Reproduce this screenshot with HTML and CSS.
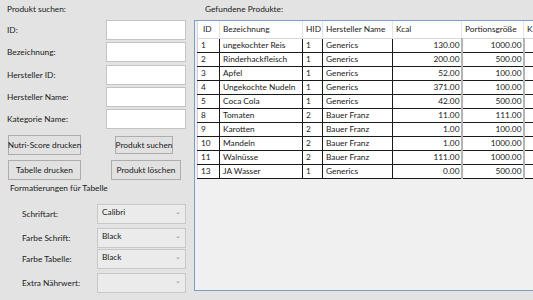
FILE: index.html
```html
<!DOCTYPE html>
<html>
<head>
<meta charset="utf-8">
<link rel="stylesheet" href="styles.css">
</head>
<body>
<div class="window">
  <div class="left">
    <div class="title">Produkt suchen:</div>
    <div class="frow r1"><span class="lbl">ID:</span><span class="tb"></span></div>
    <div class="frow"><span class="lbl">Bezeichnung:</span><span class="tb"></span></div>
    <div class="frow"><span class="lbl">Hersteller ID:</span><span class="tb"></span></div>
    <div class="frow"><span class="lbl">Hersteller Name:</span><span class="tb"></span></div>
    <div class="frow"><span class="lbl">Kategorie Name:</span><span class="tb"></span></div>
    <div class="brow b1">
      <span class="btn btn-nutri">Nutri-Score drucken</span>
      <span class="btn btn-suchen">Produkt suchen</span>
    </div>
    <div class="brow b2">
      <span class="btn btn-tab">Tabelle drucken</span>
      <span class="btn btn-loeschen">Produkt löschen</span>
    </div>
    <div class="subtitle">Formatierungen für Tabelle</div>
    <div class="crow c1"><span class="clbl">Schriftart:</span><span class="combo"><span class="cval">Calibri</span><span class="arrow">&#8964;</span></span></div>
    <div class="crow c2"><span class="clbl">Farbe Schrift:</span><span class="combo"><span class="cval">Black</span><span class="arrow">&#8964;</span></span></div>
    <div class="crow c3"><span class="clbl">Farbe Tabelle:</span><span class="combo"><span class="cval">Black</span><span class="arrow">&#8964;</span></span></div>
    <div class="crow c4"><span class="clbl">Extra Nährwert:</span><span class="combo"><span class="cval"></span><span class="arrow">&#8964;</span></span></div>
  </div>
  <div class="right">
    <div class="rtitle">Gefundene Produkte:</div>
    <div class="gridbox">
      <table class="grid">
        <colgroup>
          <col class="w-id"><col class="w-bez"><col class="w-hid"><col class="w-her"><col class="w-kcal"><col class="w-port"><col class="w-ka">
        </colgroup>
        <thead>
          <tr><th>ID</th><th>Bezeichnung</th><th>HID</th><th>Hersteller Name</th><th>Kcal</th><th>Portionsgröße</th><th>Ka</th></tr>
        </thead>
        <tbody>
          <tr><td>1</td><td>ungekochter Reis</td><td>1</td><td>Generics</td><td class="num">130.00</td><td class="num">1000.00</td><td></td></tr>
          <tr><td>2</td><td>Rinderhackfleisch</td><td>1</td><td>Generics</td><td class="num">200.00</td><td class="num">500.00</td><td></td></tr>
          <tr><td>3</td><td>Apfel</td><td>1</td><td>Generics</td><td class="num">52.00</td><td class="num">100.00</td><td></td></tr>
          <tr><td>4</td><td>Ungekochte Nudeln</td><td>1</td><td>Generics</td><td class="num">371.00</td><td class="num">100.00</td><td></td></tr>
          <tr><td>5</td><td>Coca Cola</td><td>1</td><td>Generics</td><td class="num">42.00</td><td class="num">500.00</td><td></td></tr>
          <tr><td>8</td><td>Tomaten</td><td>2</td><td>Bauer Franz</td><td class="num">11.00</td><td class="num">111.00</td><td></td></tr>
          <tr><td>9</td><td>Karotten</td><td>2</td><td>Bauer Franz</td><td class="num">1.00</td><td class="num">100.00</td><td></td></tr>
          <tr><td>10</td><td>Mandeln</td><td>2</td><td>Bauer Franz</td><td class="num">1.00</td><td class="num">1000.00</td><td></td></tr>
          <tr><td>11</td><td>Walnüsse</td><td>2</td><td>Bauer Franz</td><td class="num">111.00</td><td class="num">1000.00</td><td></td></tr>
          <tr><td>13</td><td>JA Wasser</td><td>1</td><td>Generics</td><td class="num">0.00</td><td class="num">500.00</td><td></td></tr>
        </tbody>
      </table>
    </div>
  </div>
</div>
</body>
</html>
```

FILE: styles.css
```css
* { box-sizing: border-box; }
html, body { margin: 0; padding: 0; }
body {
  width: 533px;
  height: 300px;
  overflow: hidden;
  background: #e3e3e3;
  font-family: Lato, "Open Sans", sans-serif;
  font-size: 8.3px;
  color: #1a1a1a;
}
.window { display: flex; width: 533px; height: 300px; }
.left { width: 190px; flex: none; }
.title { margin: 4px 0 0 7px; height: 11px; line-height: 11px; }
.frow { display: flex; align-items: center; height: 20px; margin-top: 2.3px; padding-left: 7px; }
.frow.r1 { margin-top: 5px; }
.lbl { width: 99px; }
.tb { width: 80px; height: 20px; background: #fff; border: 1px solid #c4c4c4; }
.brow { display: flex; align-items: center; height: 20px; padding-left: 8px; }
.b1 { margin-top: 6px; }
.b2 { margin-top: 5px; }
.btn { display: flex; align-items: center; justify-content: center; background: #e1e1e1; border: 1px solid #adadad; height: 20px; white-space: nowrap; flex: none; }
.btn-nutri { width: 73px; }
.btn-tab { width: 73px; }
.btn-suchen { width: 58px; height: 18px; margin-left: 34px; }
.btn-loeschen { width: 70px; margin-left: 30px; }
.subtitle { margin: 3px 0 0 10px; height: 11px; line-height: 11px; }
.crow { display: flex; align-items: center; height: 20px; padding-left: 22px; }
.c1 { margin-top: 10px; }
.c2 { margin-top: 4px; }
.c3 { margin-top: 1px; }
.c4 { margin-top: 4px; }
.clbl { width: 75px; }
.combo { position: relative; width: 89px; height: 20px; background: #ebebeb; border: 1px solid #c8c8c8; }
.cval { position: absolute; left: 4px; top: 2px; }
.arrow { position: absolute; right: 4px; top: 2px; color: #8a8a8a; font-size: 7px; }
.right { flex: 1; }
.rtitle { margin: 4px 0 0 15px; height: 11px; line-height: 11px; }
.gridbox {
  margin: 5px 0 0 4px;
  width: 400px;
  height: 271px;
  background: #f0f0f0;
  border: 1px solid #7f9dc4;
  padding: 0 0 0 2px;
}
.grid { border-collapse: collapse; table-layout: fixed; width: 386px; }
.w-id { width: 22px; }
.w-bez { width: 83px; }
.w-hid { width: 20px; }
.w-her { width: 70px; }
.w-kcal { width: 69px; }
.w-port { width: 62px; }
.w-ka { width: 60px; }
th {
  height: 17px;
  background: #fff;
  font-weight: normal;
  text-align: left;
  padding: 0 0 0 3px;
  border-right: 1px solid #e4e4e4;
  border-bottom: 1px solid #d8d8d8;
  white-space: nowrap;
  overflow: hidden;
}
th:first-child { padding-left: 5px; border-left: 1px solid #d8d8d8; }
td {
  height: 14px;
  background: #fff;
  padding: 0 0 0 3px;
  border-bottom: 1px solid #1a1a1a;
  border-right: 1px solid #1a1a1a;
  white-space: nowrap;
  overflow: hidden;
}
td:first-child { border-left: 1px solid #cfcfcf; }
td.num { text-align: right; padding: 0 1px 0 0; border-right: 2px solid #b4b4b4; }
td:last-child { border-right: none; }
```
